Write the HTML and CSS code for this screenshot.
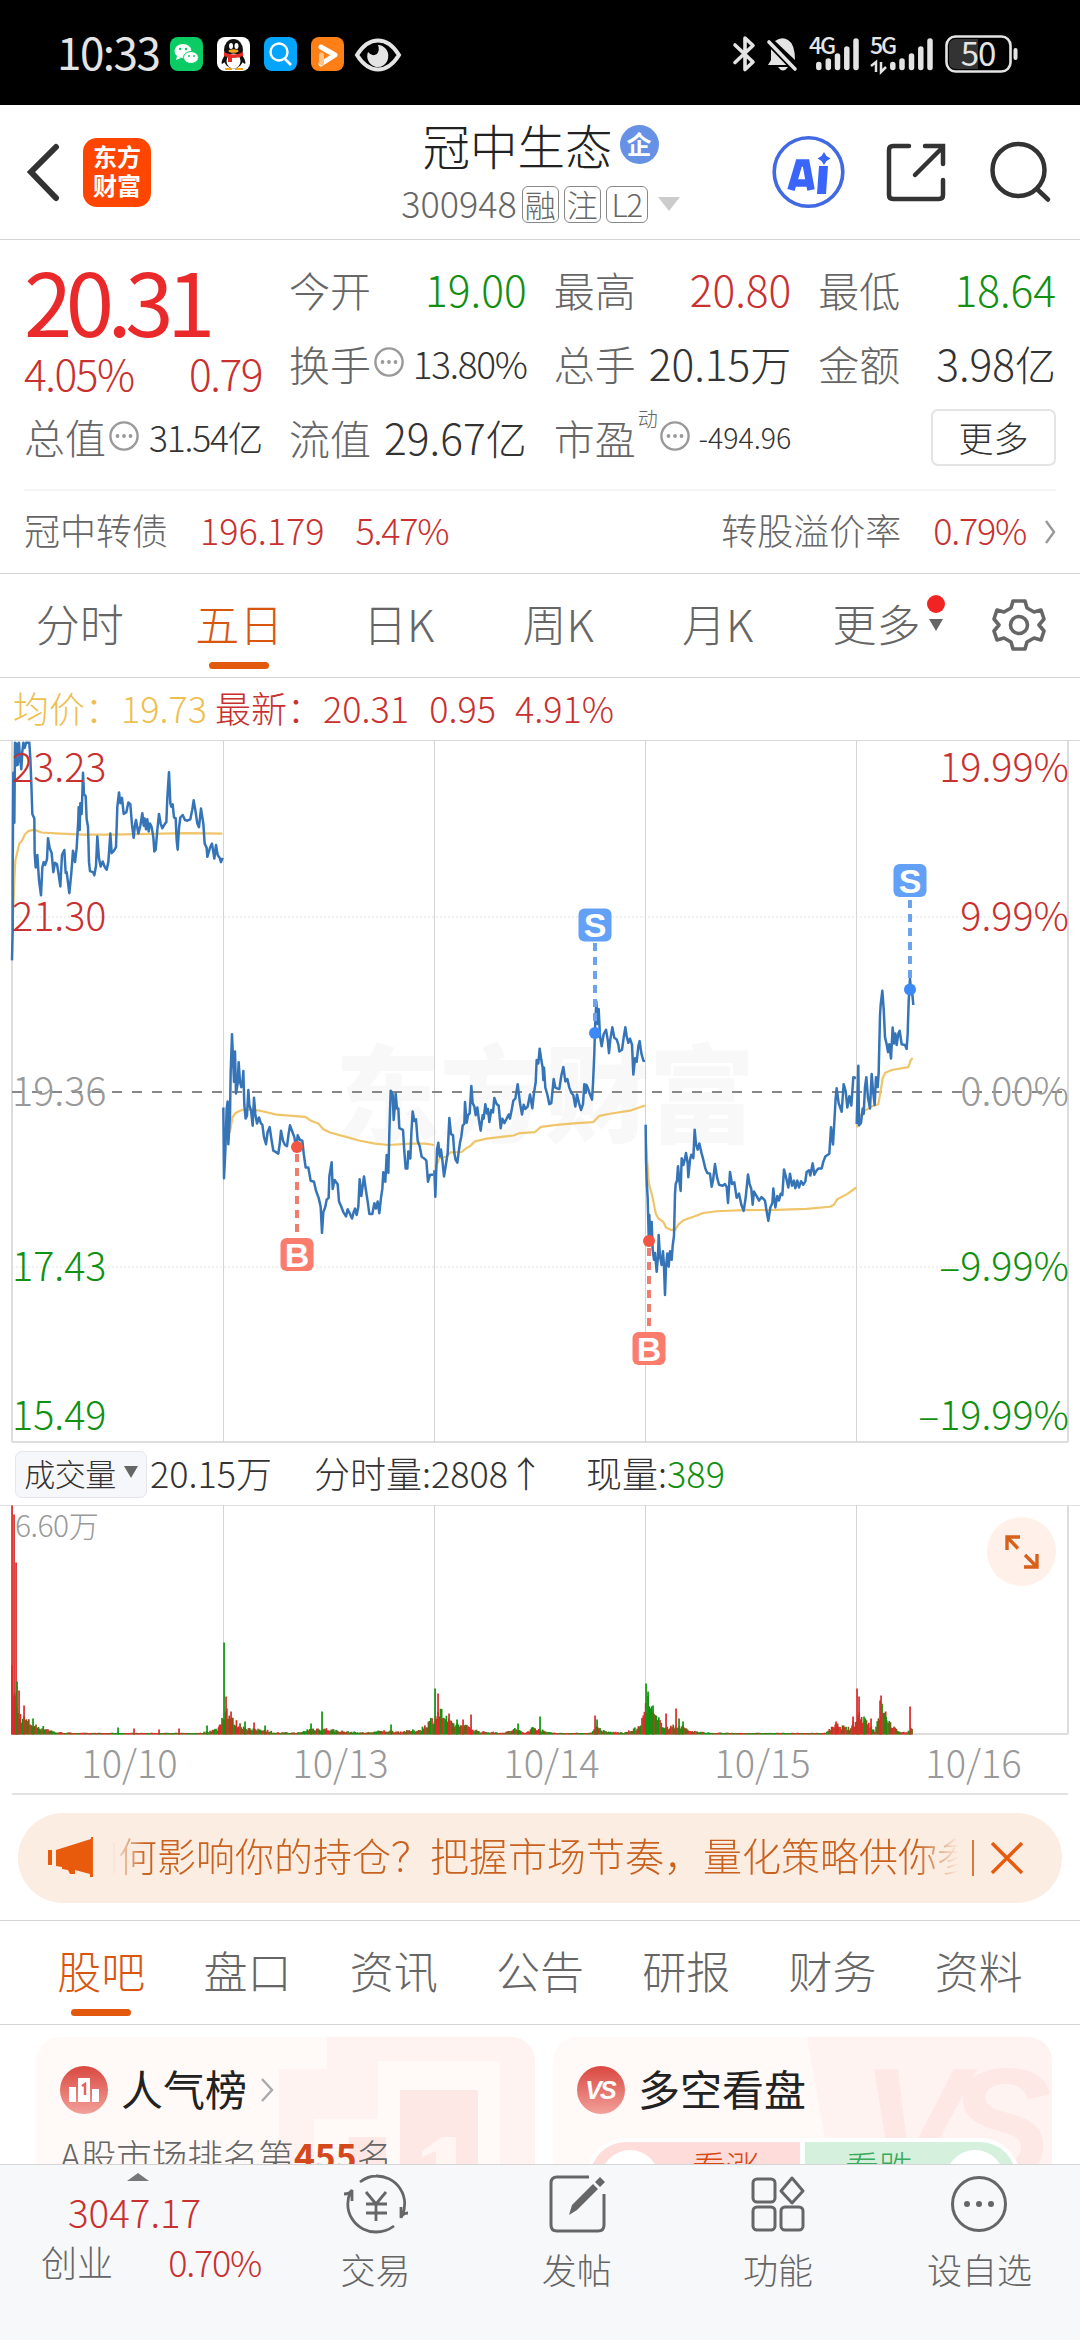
FILE: index.html
```html
<!DOCTYPE html>
<html lang="zh-CN">
<head>
    <meta charset="UTF-8">
    <meta name="viewport" content="width=device-width, initial-scale=1.0">
    <title>冠中生态 300948</title>
    <link rel="stylesheet" href="styles.css">
</head>
<body>

<div class="status-bar">
    <span class="clock">10:33</span>
    <svg class="apps" width="236" height="40" viewBox="168 34 236 40">
        <rect x="170" y="37" width="33" height="34" rx="8" fill="#0acb64"/>
        <ellipse cx="183" cy="51" rx="8.500" ry="7" fill="#fff"/>
        <path d="M177 56l-1 4 5-2z" fill="#fff"/>
        <ellipse cx="191" cy="57.500" rx="7.500" ry="6" fill="#fff" stroke="#0acb64"/>
        <g fill="#0acb64"><circle cx="180" cy="49" r="1.200"/><circle cx="186" cy="49" r="1.200"/><circle cx="189" cy="56" r="1"/><circle cx="194" cy="56" r="1"/></g>
        <rect x="217" y="37" width="33" height="34" rx="8" fill="#fff"/>
        <path d="M225 55c-3 4-4 8-3 9l3-2zM242 55c3 4 4 8 3 9l-3-2z" fill="#111"/>
        <ellipse cx="233.500" cy="50" rx="9.500" ry="11" fill="#111"/>
        <ellipse cx="233.500" cy="59" rx="9.500" ry="9.500" fill="#111"/>
        <ellipse cx="233.500" cy="61" rx="7" ry="7.500" fill="#fff"/>
        <path d="M224 52q9.500 5 19 0v4q-9.500 4-19 0z" fill="#e22b22"/><path d="M228 55h4v7h-4z" fill="#e22b22"/>
        <ellipse cx="231" cy="46" rx="2" ry="3" fill="#fff"/><ellipse cx="236.500" cy="46" rx="2" ry="3" fill="#fff"/>
        <ellipse cx="233.500" cy="51" rx="5" ry="1.800" fill="#f7a21b"/><path d="M225 68h7v2h-7zM235 68h8v2h-8z" fill="#f7a21b"/>
        <rect x="264" y="37" width="33" height="34" rx="8" fill="#06a5fd"/>
        <circle cx="279" cy="52" r="8.500" fill="none" stroke="#fff" stroke-width="2.400"/>
        <path d="M285 59l6 6" stroke="#fff" stroke-width="2.600"/>
        <rect x="311" y="37" width="33" height="34" rx="8" fill="#fd7f16"/>
        <path d="M321 47l14 8-14 9" fill="none" stroke="#fff" stroke-width="5" stroke-linejoin="round" stroke-linecap="round"/>
        <path d="M321.500 55v8" stroke="#ffc48a" stroke-width="5" stroke-linecap="round"/>
        <path d="M357 55q9-14.500 21-14.500t21 14.500q-9 14.500-21 14.500t-21-14.500z" fill="none" stroke="#e4e4e4" stroke-width="4"/>
        <path d="M378 45a10.500 11 0 1 1-10 7q4 5 9 2 3-4 1-9z" fill="#e4e4e4"/>
    </svg>
    <svg class="signals" width="290" height="46" viewBox="730 31 290 46">
        <path d="M735 45l18 17-8 7.500V38l8 7.500-18 17" fill="none" stroke="#e4e4e4" stroke-width="3.600" stroke-linejoin="round" stroke-linecap="round"/>
        <path d="M771 48v12l-3 5h22zM775 41q7-5 13-1 7 4 7 20zM778 67h10q-5 7-10 0z" fill="#e4e4e4"/>
        <path d="M769 42l27 28" stroke="#000" stroke-width="7"/>
        <path d="M769 42l26 27" stroke="#e4e4e4" stroke-width="3.600" stroke-linecap="round"/>
        <text x="809" y="54" class="net">4G</text>
        <text x="870" y="54" class="net">5G</text>
        <g stroke="#e4e4e4" stroke-width="5.500" stroke-linecap="round">
            <path d="M818.800 64.500v3M828.300 61v6.500M837.500 56v11.500M846.800 49v18.500M856 41v26.500M892.800 64.500v3M902 61v6.500M911.500 56v11.500M920.800 49v18.500M930 41v26.500"/>
        </g>
        <path d="M871 66l5-4v10M881 62v10l5-5" fill="none" stroke="#e4e4e4" stroke-width="2.500"/>
        <rect x="946.500" y="36.500" width="64" height="35" rx="9" fill="#000" stroke="#e4e4e4" stroke-width="2.600"/>
        <path d="M956 39h22v30h-22q-7 0-7-7v-16q0-7 7-7z" fill="#333"/>
        <path d="M1015.500 50v8" stroke="#e4e4e4" stroke-width="4" stroke-linecap="round"/>
        <text x="978" y="65.500" class="battery-text">50</text>
    </svg>
</div>

<header class="header">
    <svg class="back" width="34" height="60" viewBox="0 0 34 60"><path d="M30 5L5 30l25 26" fill="none" stroke="#333" stroke-width="6" stroke-linecap="round"/></svg>
    <div class="logo"><span>东方</span><span>财富</span></div>
    <div class="title">
        <div class="name">冠中生态<span class="badge">企</span></div>
        <div class="code"><span>300948</span><i>融</i><i>注</i><i class="l2">L2</i><b class="caret"></b></div>
    </div>
    <svg class="actions" width="282" height="76" viewBox="770 134 282 76">
        <circle cx="808.500" cy="172" r="34.300" fill="none" stroke="#4169e1" stroke-width="3.600"/>
        <path d="M791 190l8-27h7l5 27M795 183h13" fill="none" stroke="#3965fa" stroke-width="7.500"/>
        <path d="M819 166h9l-2 28h-9zM824 152l2.500 4 4 2.500-4 2.500-2.500 4-2.500-4-4-2.500 4-2.500z" fill="#3965fa"/>
        <g fill="none" stroke="#333" stroke-width="4.500" stroke-linecap="round">
            <path d="M909 146h-16q-4 0-4 4v45q0 4 4 4h46q4 0 4-4v-15M925 146h18v18M942 148l-27 27"/>
            <circle cx="1018.500" cy="170" r="26"/><path d="M1038 190l10 9.500"/>
        </g>
    </svg>
</header>

<section class="quote">
    <div class="price-col">
        <div class="price">20.31</div>
        <div class="cell red num"><span>4.05%</span><span>0.79</span></div>
        <div class="cell"><label>总值</label><svg class="dots" viewBox="0 0 30 30"><use href="#dots"/></svg><span class="small num">31.54<em>亿</em></span></div>
    </div>
    <div class="grid">
        <div class="cell"><label>今开</label><span class="green">19.00</span></div>
        <div class="cell"><label>最高</label><span class="red">20.80</span></div>
        <div class="cell"><label>最低</label><span class="green">18.64</span></div>
        <div class="cell"><label>换手</label><svg class="dots" viewBox="0 0 30 30"><use href="#dots"/></svg><span class="num mid">13.80%</span></div>
        <div class="cell"><label>总手</label><span>20.15<em>万</em></span></div>
        <div class="cell"><label>金额</label><span>3.98<em>亿</em></span></div>
        <div class="cell"><label>流值</label><span>29.67<em>亿</em></span></div>
        <div class="cell"><label>市盈</label><sup>动</sup><svg class="dots" viewBox="0 0 30 30"><use href="#dots"/></svg><span class="tiny">-494.96</span></div>
        <div class="cell"><button class="more">更多</button></div>
    </div>
    <div class="bond">
        <span>冠中转债</span><span class="red v1">196.179</span><span class="num red v2">5.47%</span>
        <span class="prem">转股溢价率</span><span class="num red">0.79%</span>
        <svg width="12" height="26" viewBox="0 0 12 26"><path d="M2 2l8 11-8 11" fill="none" stroke="#999" stroke-width="2.400"/></svg>
    </div>
</section>

<nav class="tabs">
    <span>分时</span><span class="on">五日</span><span>日K</span><span>周K</span><span>月K</span>
    <span class="drop">更多<b class="red-dot"></b><b class="tri"></b></span>
    <svg class="gear" width="54" height="54" viewBox="0 0 54 54" fill="none" stroke="#666" stroke-width="3.600">
        <path d="M21 3h12l2 7 7 4 7-2 3 9-5 6 5 6-3 9-7-2-7 4-2 7H21l-2-7-7-4-7 2-3-9 5-6-5-6 3-9 7 2 7-4z" stroke-linejoin="round"/><circle cx="27" cy="27" r="8.500"/>
    </svg>
</nav>

<div class="legend">
    <span class="avg">均价：</span><span class="avg">19.73</span><span class="g2">最新：</span><span>20.31</span><span class="g4">0.95</span><span class="g5">4.91%</span>
</div>

<svg class="chart" width="1080" height="703" viewBox="0 740 1080 703">
    <text x="335" y="1134" class="watermark" textLength="420">东方财富</text>
    <path d="M0 740.500h1080" stroke="#d9d9d9"/>
    <path d="M12 741v701M1068 741v701M12 1442h1056" stroke="#ddd" stroke-width="2"/>
    <path d="M223.500 741v701M434.500 741v701M645.500 741v701M856.500 741v701" stroke="#d4d4d4"/>
    <path d="M12 917h1056M12 1267h1056" stroke="#e2e2e2" stroke-dasharray="2 2"/>
    <path d="M12 1092h1056" stroke="#888" stroke-width="2" stroke-dasharray="10 10"/>
    <g class="curve">
        <g transform="translate(0 730) scale(.33333 .35714)">
            <polyline class="mean" points="37,560 40,500 43,420 46,365 50,350 58,318 66,310 75,292 85,283 97,280 108,281 125,287 180,290 250,293 340,293 450,291 560,289 667,290"/>
            <polyline class="mean" points="672,1130 680,1130 690,1125 697,1085 706,1073 720,1066 735,1062 780,1066 830,1077 915,1083 935,1095 955,1102 970,1118 990,1127 1030,1137 1080,1150 1125,1158 1165,1162 1230,1158 1275,1158 1302,1162"/>
            <polyline points="36,645 38,560 38,400 40,120 41,180 43,260 45,36 47,100 50,38 53,98 57,36 60,80 64,110 67,60 70,36 74,50 78,36 88,36 91,80 94,150 97,235 103,248 104,345 107,385 112,350 117,420 123,463 127,385 131,370 135,378 141,362 144,303 149,330 155,345 160,398 165,372 171,376 176,405 181,438 186,350 193,336 197,400 200,398 208,457 214,400 219,338 225,370 230,330 235,250 236,216 239,280 241,205 245,235 249,120 252,180 257,185 260,250 264,270 267,370 270,395 279,398 283,407 288,380 292,298 297,360 302,382 308,368 315,385 320,391 325,370 331,290 335,345 342,338 348,328 352,215 357,175 361,205 366,190 371,235 379,230 385,203 391,208 396,265 401,302 405,265 408,252 415,290 421,268 427,233 431,268 434,248 438,278 442,250 446,284 450,262 455,272 460,300 463,340 467,335 472,280 477,235 482,262 487,275 495,262 499,258 502,190 507,118 511,205 514,215 518,208 522,245 527,247 530,310 533,335 537,275 541,245 548,238 555,252 562,254 571,250 577,222 581,197 587,230 592,262 597,272 603,220 610,262 614,318 620,330 622,355 630,330 636,318 643,360 648,322 653,350 659,358 663,370 668,358"/>
            <polyline points="670,1057 672,1255 676,1180 680,1060 683,1040 685,1160 690,1080 692,960 696,852 700,940 702,985 705,900 708,1018 713,990 716,930 720,985 724,1000 728,980 730,955 733,1050 737,1088 741,1080 745,1008 748,1050 753,1065 758,1108 762,1030 766,1075 771,1102 777,1085 783,1102 787,1105 792,1140 798,1160 803,1125 809,1112 815,1150 820,1178 828,1182 835,1186 839,1160 843,1122 849,1150 855,1162 861,1165 866,1130 870,1107 877,1125 883,1140 889,1175 893,1135 900,1148 907,1150 911,1185 917,1225 925,1225 932,1262 942,1265 948,1290 956,1310 962,1335 966,1408 970,1350 976,1335 980,1315 986,1310 988,1250 995,1210 998,1285 1004,1260 1013,1272 1017,1320 1024,1335 1030,1350 1038,1362 1043,1342 1050,1355 1056,1368 1061,1350 1065,1340 1070,1358 1075,1335 1079,1258 1084,1305 1092,1250 1098,1290 1103,1320 1108,1355 1117,1355 1123,1325 1128,1340 1133,1320 1138,1353 1143,1310 1147,1285 1150,1238 1156,1265 1160,1190 1165,1240 1168,1130 1172,1010 1178,1020 1181,1092 1184,1060 1187,1018 1191,1060 1195,1060 1198,1115 1209,1120 1213,1180 1217,1228 1222,1228 1225,1180 1231,1200 1234,1130 1238,1068 1243,1095 1248,1090 1253,1150 1259,1165 1265,1195 1273,1200 1279,1205 1284,1265 1290,1245 1300,1245"/>
        </g>
        <g transform="translate(430 850) scale(.33333 .34437)">
            <polyline class="mean" points="13,920 20,915 28,895 50,890 62,878 95,877 110,865 120,860 135,846 170,838 250,829 270,822 315,819 333,804 380,798 440,793 490,790 508,772 540,766 600,757 645,742"/>
            <polyline class="mean" points="648,850 652,910 657,970 668,1010 677,1055 685,1070 700,1080 708,1096 722,1103 735,1103 745,1088 760,1075 790,1065 820,1054 860,1049 940,1046 1040,1045 1130,1042 1200,1036 1212,1030 1222,1014 1250,1000 1279,980"/>
            <polyline points="13,930 16,1007 18,950 21,870 25,850 29,890 33,870 37,900 42,948 48,912 53,880 58,778 63,825 69,828 73,880 77,900 82,908 87,870 90,850 94,832 98,800 103,795 105,732 110,792 114,770 119,765 124,685 128,735 133,745 137,770 142,748 147,785 152,815 158,770 161,780 166,738 171,765 174,752 178,790 184,755 189,762 193,720 200,738 206,742 212,808 217,780 223,793 230,780 236,768 240,780 246,750 250,728 256,722 263,680 270,735 276,768 281,740 286,752 293,745 300,710 307,750 312,705 317,675 320,610 325,620 329,577 334,610 338,632 340,668 342,632 346,690 352,710 358,738 364,735 371,665 376,690 383,693 388,694 394,655 400,630 406,672 412,665 418,690 424,705 430,712 436,745 441,710 447,735 453,755 459,738 463,680 467,705 469,682 473,690 480,710 486,725 489,680 493,590 495,520 499,440 503,505 506,462 510,540 515,570 521,535 528,522 533,550 537,590 541,550 547,515 553,545 560,550 565,565 568,585 576,580 581,545 586,515 590,540 595,560 600,548 606,565 610,652 615,605 620,615 625,570 629,555 634,590 640,612 645,613"/>
            <polyline points="647,798 648,900 650,960 653,1010 656,1120 658,1060 661,1130 665,1080 668,1160 672,1190 675,1170 680,1225 684,1180 686,1118 690,1180 695,1205 699,1165 702,1210 705,1292 708,1210 712,1172 716,1210 720,1165 725,1190 728,1150 732,1120 735,1000 737,970 741,960 744,918 748,960 752,990 755,895 760,915 764,900 768,880 773,910 775,950 780,900 784,885 790,895 794,812 798,855 803,870 808,852 814,878 820,900 826,925 832,938 840,940 845,978 849,960 855,912 861,950 867,972 878,975 885,970 890,978 894,1025 900,935 906,970 913,965 920,1010 927,998 934,1030 941,1048 947,1010 954,942 959,970 964,985 968,1030 972,992 980,1005 987,1018 995,1008 1005,1018 1010,1050 1015,1077 1021,1038 1027,1025 1030,983 1036,1038 1042,1005 1047,1018 1052,998 1057,1002 1062,928 1068,950 1075,980 1080,940 1086,975 1092,960 1096,982 1102,960 1107,980 1113,962 1120,972 1126,962 1130,935 1137,930 1141,945 1148,910 1153,943 1160,930 1165,925 1175,925 1180,905 1186,890 1198,882 1203,805 1209,855 1213,790 1217,720 1220,692 1226,735 1235,760 1241,680 1247,700 1252,748 1258,715 1264,742 1270,660 1278,662"/>
        </g>
        <g transform="translate(640 730) scale(.33333 .35714)">
            <polyline class="mean" points="651,1113 655,1090 665,1075 675,1066 692,1055 715,1048 722,1010 728,975 736,960 755,952 805,944 812,925 818,918"/>
            <polyline points="650,1103 655,940 657,1107 663,1100 668,1060 671,1075 675,1000 679,972 684,1030 690,1060 695,963 699,1010 704,1050 708,972 713,1000 716,960 720,800 722,770 727,730 731,780 735,860 740,880 744,902 748,880 753,920 758,833 762,878 766,850 770,882 775,850 779,842 785,880 795,882 800,893 803,850 806,760 810,697 814,740 817,740 820,770"/>
        </g>
    </g>
    <g class="axis">
        <text x="12" y="782" class="red">23.23</text><text x="12" y="931" class="red">21.30</text>
        <text x="12" y="1106" class="grey">19.36</text><text x="12" y="1281" class="green">17.43</text><text x="12" y="1430" class="green">15.49</text>
        <g text-anchor="end">
            <text x="1069" y="782" class="red">19.99%</text><text x="1069" y="931" class="red">9.99%</text>
            <text x="1069" y="1106" class="grey">0.00%</text><text x="1069" y="1281" class="green">–9.99%</text><text x="1069" y="1430" class="green">–19.99%</text>
        </g>
    </g>
    <g class="mark sell">
        <path d="M595 943v84M910 900v82"/>
        <circle cx="595" cy="1033" r="6"/><circle cx="910" cy="989.500" r="6"/>
        <rect x="578.500" y="908.500" width="33" height="33" rx="6"/><rect x="893.500" y="864" width="33" height="33" rx="6"/>
        <text x="595" y="937">S</text><text x="910" y="892.500">S</text>
    </g>
    <g class="mark buy">
        <path d="M297 1154v84M649 1248v84"/>
        <circle cx="297" cy="1147" r="6"/><circle cx="649" cy="1241" r="6"/>
        <rect x="280.500" y="1238" width="33" height="33" rx="6"/><rect x="632.500" y="1332" width="33" height="33" rx="6"/>
        <text x="297" y="1266.500">B</text><text x="649" y="1360.500">B</text>
    </g>
</svg>

<div class="vol-head">
    <span class="picker">成交量<b class="tri"></b></span>
    <span>20.15万</span><span class="m1">分时量:2808↑</span><span class="m2">现量:<span class="green">389</span></span>
</div>
<div class="volume">
    <svg width="1080" height="230" viewBox="0 1505 1080 230">
        <path d="M0 1505.500h1080" stroke="#e0e0e0"/>
        <path d="M12 1505v229M1068 1505v229M12 1734h1056" stroke="#ddd" stroke-width="2"/>
        <path d="M223.500 1505v229M434.500 1505v229M645.500 1505v229M856.500 1505v229" stroke="#d4d4d4"/>
        <text x="15" y="1537" class="max">6.60万</text>
        <g id="bars"></g>
    </svg>
    <svg class="expand" width="69" height="69" viewBox="0 0 69 69">
        <circle cx="34.500" cy="34.500" r="34.500" fill="#fff1ea"/>
        <path d="M20 33V20h13M20.500 20.500L31 31.500M50 37v13H37M49.500 49.500L38 38" fill="none" stroke="#d9601a" stroke-width="3.400"/>
    </svg>
</div>
<div class="dates"><span>10/10</span><span>10/13</span><span>10/14</span><span>10/15</span><span>10/16</span></div>

<div class="notice">
    <svg width="46" height="42" viewBox="0 0 46 42" fill="#e85a0c"><path d="M0 13h4v15H0zM8 13L43 2V0h2v40h-3v-3l-15-4v4h-5l-2-4-6-1v-2l-6-1z"/></svg>
    <div class="marquee"><span>如何影响你的持仓？把握市场节奏，量化策略供你参</span></div>
    <i></i>
    <svg width="32" height="32" viewBox="0 0 32 32"><path d="M1 1l30 30M31 1L1 31" stroke="#e85a0c" stroke-width="3.400"/></svg>
</div>

<nav class="tabs2">
    <span class="on">股吧</span><span>盘口</span><span>资讯</span><span>公告</span><span>研报</span><span>财务</span><span>资料</span>
</nav>

<div class="cards">
    <div class="card">
        <svg class="deco" width="260" height="130" viewBox="275 2037 260 130"><path d="M327 2037h208v130h-35v-106H378v58h-64v48h-35v-98h48z" fill="#fef3f1"/><path d="M400 2090h78v77h-78zM349 2137h37v30h-37z" fill="#fde8e5"/><path d="M422 2151l20-14h14v30h-20v-16l-14 6z" fill="#fff5f3"/></svg>
        <div class="card-title">
            <svg width="48" height="48" viewBox="0 0 48 48"><use href="#disc"/><path d="M9 21h7v15H9zM18 12h12v24H18zM32 23h7v13h-7z" fill="#fff"/><path d="M22 20l3-2v11" fill="none" stroke="#e2645d" stroke-width="2.500"/></svg>
            <span>人气榜</span>
            <svg class="chev" width="14" height="24" viewBox="0 0 14 24"><path d="M2 1l10 11L2 23" fill="none" stroke="#aaa" stroke-width="2.400"/></svg>
        </div>
        <div class="rank">A股市场排名第<strong>455</strong>名</div>
    </div>
    <div class="card">
        <svg class="deco" width="245" height="130" viewBox="808 2037 245 130"><path d="M808 2037h245v130h-222z" fill="#fef3f1"/><text x="862" y="2178" class="vs-shade">VS</text></svg>
        <div class="card-title">
            <svg width="48" height="48" viewBox="0 0 48 48"><use href="#disc"/><text x="23" y="33" class="vs">VS</text></svg>
            <span>多空看盘</span>
        </div>
        <div class="poll"><div class="up"><b></b>看涨</div><div class="down">看跌<b></b></div></div>
    </div>
</div>

<footer class="bottom">
    <div class="index">
        <b class="arrow"></b>
        <div class="red val">3047.17</div>
        <div class="row"><span>创业</span><span class="num red">0.70%</span></div>
    </div>
    <div class="item">
        <svg width="68" height="60" viewBox="0 0 68 60" fill="none" stroke="#666" stroke-width="2.800"><path d="M18 8q8-6 16-6a28 28 0 0 1 26 40M52 52q-8 6-18 6A28 28 0 0 1 9 17M2 20q6 0 8-4v11M66 39q-6 0-7 5V33"/><path d="M24 18l10 12 10-12M24 30h21M24 39h21M34 30v17"/></svg>
        <span>交易</span>
    </div>
    <div class="item">
        <svg width="60" height="60" viewBox="0 0 60 60" fill="none" stroke="#666" stroke-width="3"><path d="M42 3H10q-6 0-6 6v42q0 6 6 6h41q6 0 6-6V20"/><path d="M22 41l3-10L46 10l5 5-21 21zM48 8l5-5 5 5-5 5z" fill="#666" stroke="none"/></svg>
        <span>发帖</span>
    </div>
    <div class="item">
        <svg width="56" height="60" viewBox="0 0 56 60" fill="none" stroke="#666" stroke-width="3"><rect x="3" y="5" width="22" height="23" rx="4"/><rect x="3" y="33" width="22" height="23" rx="4"/><rect x="31" y="33" width="22" height="23" rx="4"/><path d="M42 4l11 13-11 12-11-12z" stroke-linejoin="round"/></svg>
        <span>功能</span>
    </div>
    <div class="item">
        <svg width="60" height="60" viewBox="0 0 60 60"><circle cx="30" cy="30" r="26.500" fill="none" stroke="#666" stroke-width="3"/><g fill="#666"><circle cx="18" cy="30" r="3"/><circle cx="30" cy="30" r="3"/><circle cx="42" cy="30" r="3"/></g></svg>
        <span>设自选</span>
    </div>
</footer>

<svg class="defs" width="0" height="0">
    <defs>
        <linearGradient id="discFill" x1="0" y1="0" x2="0" y2="1"><stop offset="0" stop-color="#d94840"/><stop offset="1" stop-color="#f2a09a"/></linearGradient>
        <g id="disc"><circle cx="24" cy="24" r="24" fill="url(#discFill)"/></g>
        <g id="dots"><circle cx="15" cy="15" r="13.600" fill="none" stroke="#999" stroke-width="2.400"/><g fill="#999"><circle cx="8.500" cy="15" r="1.900"/><circle cx="15" cy="15" r="1.900"/><circle cx="21.500" cy="15" r="1.900"/></g></g>
    </defs>
</svg>

<script src="volume.js"></script>
</body>
</html>
```
FILE: volume.js
```js
// Height of the volume along the x axis: [x, height]
const shape = [
    [12, 60], [18, 22], [25, 16], [35, 9], [45, 7], [55, 2.5], [75, 1.5], [200, 1.5], [218, 6],
    [226, 28], [232, 15], [240, 10], [252, 5], [262, 6], [275, 2], [300, 2], [310, 6], [325, 6], [345, 3],
    [365, 2], [385, 4], [400, 3], [420, 5], [430, 14], [440, 25], [450, 12], [465, 9], [480, 3], [505, 2], [515, 6],
    [525, 1.5], [534, 8], [545, 3], [560, 1.5], [590, 1.5], [597, 8], [605, 3], [625, 2], [640, 8],
    [647, 36], [655, 18], [668, 7], [680, 10], [690, 4], [705, 2], [730, 1.5], [825, 1.5], [836, 10], [850, 6],
    [860, 22], [867, 14], [875, 4], [882, 28], [890, 12], [898, 3], [908, 3], [914, 9]
];

// Single bars that stand out: [x, height, colour]
const spikes = [
    [12, 229, "r"], [14, 220, "r"], [16, 172, "r"], [17, 53, "g"], [19, 44, "r"], [24, 29, "r"], [33, 16, "g"],
    [118, 7, "g"], [134, 6, "r"], [159, 5, "r"], [179, 6, "r"], [207, 9, "g"], [219, 8, "r"],
    [224, 92, "g"], [226, 38, "r"], [231, 23, "r"], [245, 13, "g"], [254, 12, "r"], [265, 9, "g"], [311, 11, "g"], [322, 23, "g"],
    [391, 10, "g"], [435, 46, "g"], [438, 41, "r"], [449, 21, "r"], [457, 15, "g"], [463, 15, "r"], [471, 20, "r"], [518, 11, "g"],
    [540, 18, "g"], [595, 19, "r"], [597, 15, "g"], [646, 51, "g"], [648, 43, "g"], [653, 29, "g"], [666, 21, "r"], [676, 26, "r"], [679, 16, "g"], [683, 13, "g"],
    [836, 13, "r"], [853, 18, "r"], [857, 46, "r"], [859, 38, "r"], [864, 18, "g"], [871, 16, "r"], [880, 34, "r"], [881, 39, "r"], [886, 18, "g"], [910, 28, "r"]
];

const colours = { r: "#dc2a2a", g: "#109410", m: "#7a5a14" };
const bars = document.getElementById("bars");

function addBar(x, height, colour) {
    const rect = document.createElementNS("http://www.w3.org/2000/svg", "rect");
    rect.setAttribute("x", x - 0.8);
    rect.setAttribute("y", 1734.5 - height);
    rect.setAttribute("width", 1.7);
    rect.setAttribute("height", height);
    rect.setAttribute("fill", colours[colour]);
    bars.appendChild(rect);
}

function heightAt(x) {
    for (let i = 1; i < shape.length; i++) {
        if (x <= shape[i][0]) {
            const [x0, h0] = shape[i - 1];
            const [x1, h1] = shape[i];
            return h0 + (h1 - h0) * (x - x0) / (x1 - x0);
        }
    }
    return 0;
}

let seed = 7;
function rand() {
    seed = (seed * 16807) % 2147483647;
    return seed / 2147483647;
}

for (let x = 12; x <= 913; x += 1.2) {
    const mix = rand();
    addBar(x, Math.max(1.5, heightAt(x) * (0.6 + rand() * 0.6)), mix < 0.38 ? "r" : mix < 0.72 ? "g" : "m");
}
spikes.forEach(s => addBar(s[0], s[1], s[2]));
```
FILE: styles.css
```css
/* General Styles */
* {
    box-sizing: border-box;
}
body {
    margin: 0;
    width: 1080px;
    height: 2340px;
    overflow: hidden;
    background: #fff;
    color: #333;
    font-family: "Noto Sans CJK SC", sans-serif;
    font-weight: 300;
    line-height: 1;
}
i, em {
    font-style: normal;
}
.num {
    letter-spacing: -0.035em;
}
.red {
    color: #c8312f;
    fill: #c8312f;
}
.green {
    color: #119011;
    fill: #119011;
}
.grey {
    fill: #999;
}
.defs {
    position: absolute;
}

/* Status bar */
.status-bar {
    height: 105px;
    background: #000;
    color: #e4e4e4;
    display: flex;
    align-items: center;
    padding: 3px 60px 0 57px;
}
.clock {
    width: 111px;
    height: 50px;
    font-size: 44px;
    letter-spacing: -1.5px;
    font-weight: 400;
    white-space: nowrap;
}
.signals {
    margin-left: auto;
    overflow: visible;
}
.net {
    fill: #e4e4e4;
    font-size: 23px;
    font-weight: 500;
    letter-spacing: -2px;
}
.battery-text {
    fill: #e4e4e4;
    font-size: 33px;
    font-weight: 400;
    text-anchor: middle;
    letter-spacing: -1px;
}

/* Header */
.header {
    height: 135px;
    border-bottom: 1px solid #d4d4d4;
    display: flex;
    align-items: center;
    padding: 0 28px 0 26px;
}
.logo {
    width: 68px;
    height: 69px;
    margin-left: 23px;
    border-radius: 14px;
    background: #fe4600;
    color: #fff;
    font-size: 24px;
    font-weight: 700;
    display: flex;
    flex-direction: column;
    align-items: center;
    justify-content: center;
    gap: 5px;
    padding-bottom: 3px;
}
.title {
    flex: 1;
    padding-left: 160px;
}
.name {
    display: flex;
    align-items: center;
    justify-content: center;
    font-size: 47.5px;
    color: #222;
    margin-bottom: 17px;
    white-space: nowrap;
}
.badge {
    width: 39px;
    height: 39px;
    margin-left: 7px;
    border-radius: 50%;
    background: #6791e5;
    color: #fff;
    font-size: 25px;
    font-weight: 700;
    line-height: 36px;
    text-align: center;
}
.code {
    display: flex;
    align-items: center;
    justify-content: center;
    height: 38px;
    font-size: 36px;
    color: #666;
}
.code span {
    height: 40px;
}
.code i {
    width: 37px;
    height: 37px;
    margin-left: 5px;
    border: 1px solid #888;
    border-radius: 6px;
    font-size: 31px;
    line-height: 33px;
    text-align: center;
}
.code .l2 {
    width: 42px;
    letter-spacing: -1px;
}
.caret {
    margin-left: 10px;
    border: 11px solid transparent;
    border-top: 14px solid #ccc;
    border-bottom: 0;
}

/* Quote */
.quote {
    height: 334px;
    padding: 12px 24px 0 24px;
    border-bottom: 1px solid #d4d4d4;
    display: grid;
    grid-template-columns: 238px 1fr;
    grid-template-rows: 237px 84px;
    column-gap: 27px;
}
.price-col {
    padding-top: 4px;
}
.price {
    height: 86px;
    color: #ea2a2a;
    font-size: 87px;
    font-weight: 400;
    letter-spacing: -6.5px;
}
.cell {
    display: flex;
    align-items: center;
    justify-content: space-between;
    font-size: 42.5px;
    white-space: nowrap;
}
.price-col .cell {
    height: 63px;
}
.cell label {
    font-size: 41px;
    color: #666;
}
.cell em {
    font-size: 41px;
}
.cell .dots {
    width: 30px;
    height: 30px;
    margin: 0 auto 2px 3px;
}
.cell .small, .cell .small em {
    font-size: 35.5px;
}
.cell .mid {
    font-size: 37px;
}
.cell .tiny {
    font-size: 28.5px;
}
.cell sup {
    font-size: 20px;
    color: #666;
    margin: -36px 0 0 2px;
    width: 18px;
}
.cell sup + .dots {
    margin-left: 4px;
}
.grid {
    display: grid;
    grid-template-columns: repeat(3, 1fr);
    grid-template-rows: repeat(3, 74px);
    column-gap: 27px;
}
.more {
    width: 125px;
    height: 57px;
    margin-left: auto;
    padding: 0 0 7px;
    border: 2px solid #e4e4e4;
    border-radius: 7px;
    background: #fff;
    color: #333;
    font: 300 35px "Noto Sans CJK SC", sans-serif;
}
.bond {
    grid-column: 1 / 3;
    border-top: 2px solid #f4f4f4;
    display: flex;
    align-items: center;
    padding-bottom: 7px;
    font-size: 36px;
    color: #666;
}
.v1 {
    margin-left: 32px;
}
.v2 {
    margin-left: 31px;
}
.prem {
    margin: 0 32px 0 auto;
}
.bond svg {
    margin: 6px 0 0 18px;
}

/* Chart tabs */
.tabs {
    height: 104px;
    border-bottom: 1px solid #d4d4d4;
    display: flex;
    align-items: center;
    padding-right: 34px;
    color: #666;
    font-size: 44px;
}
.tabs > span {
    width: 159.500px;
    height: 103px;
    line-height: 99px;
    text-align: center;
}
.on {
    color: #d9560f;
    position: relative;
}
.on::after {
    content: "";
    position: absolute;
    left: 50%;
    bottom: 8px;
    width: 60px;
    height: 7px;
    margin-left: -30px;
    border-radius: 4px;
    background: #e2580c;
}
.tabs .drop {
    position: relative;
    width: auto;
    padding-left: 35px;
}
.red-dot {
    position: absolute;
    right: -24px;
    top: 21px;
    width: 18px;
    height: 18px;
    border-radius: 50%;
    background: #f12424;
}
.tri {
    border: 7px solid transparent;
    border-top: 12px solid #666;
    border-bottom: 0;
}
.tabs .tri {
    position: absolute;
    right: -22px;
    top: 45px;
}
.gear {
    margin: 0 0 2px auto;
}

/* Price chart */
.legend {
    height: 62px;
    display: flex;
    align-items: center;
    padding: 0 0 4px 13px;
    font-size: 36px;
    color: #c8312f;
    white-space: nowrap;
}
.avg {
    color: #edbf52;
}
.g2 { margin-left: 8px; }
.g4 { margin-left: 20px; }
.g5 { margin-left: 19px; }
.chart, .volume svg {
    display: block;
}
.watermark {
    font-size: 106px;
    font-weight: 900;
    fill: #f8f8f8;
}
.curve polyline {
    fill: none;
    stroke: #3674b8;
    stroke-width: 2.5px;
    vector-effect: non-scaling-stroke;
    stroke-linejoin: round;
}
.curve .mean {
    stroke: #f0c468;
    stroke-width: 2.2px;
}
.axis {
    font-size: 39.5px;
}
.mark path {
    stroke-width: 4px;
    stroke-dasharray: 8 6;
}
.mark text {
    fill: #fff;
    font: 700 34px "Liberation Sans", sans-serif;
    text-anchor: middle;
}
.sell {
    fill: #63a0f8;
    stroke: #6ba3ee;
    stroke-width: 0;
}
.sell circle {
    fill: #3b8af5;
}
.buy {
    fill: #fa7c6c;
    stroke: #ee7d70;
    stroke-width: 0;
}
.buy circle {
    fill: #f25643;
}

/* Volume */
.vol-head {
    height: 62px;
    display: flex;
    align-items: center;
    padding: 0 0 4px 15px;
    font-size: 36px;
    white-space: nowrap;
}
.picker {
    display: flex;
    align-items: center;
    justify-content: center;
    gap: 8px;
    width: 132px;
    height: 47px;
    margin: 4px 3px 0 0;
    padding-bottom: 4px;
    border: 1px solid #e4e6ea;
    border-radius: 7px;
    background: #f6f7fa;
    font-size: 31px;
    letter-spacing: -0.5px;
}
.m1 { margin-left: 42px; }
.m2 { margin-left: 42px; }
.volume {
    position: relative;
}
.max {
    font-size: 30px;
    fill: #999;
    letter-spacing: -0.5px;
}
.volume .expand {
    position: absolute;
    left: 987px;
    top: 12px;
}
.dates {
    height: 60px;
    margin: 0 12px;
    padding: 0 0 5px 12px;
    border-bottom: 2px solid #e2e2e2;
    display: flex;
    align-items: center;
    color: #999;
    font-size: 38px;
}
.dates span {
    flex: none;
    width: 211px;
    text-align: center;
}

/* Notice */
.notice {
    width: 1044px;
    height: 90px;
    margin: 18px 18px 17px;
    padding: 0 39px 0 30px;
    border-radius: 45px;
    background: #fcede3;
    display: flex;
    align-items: center;
}
.marquee {
    width: 848px;
    height: 56px;
    margin-left: 18px;
    overflow: hidden;
    color: #c9621f;
    font-size: 39px;
    white-space: nowrap;
    display: flex;
    line-height: 49px;
    -webkit-mask-image: linear-gradient(90deg, transparent, #000 4%, #000 95%, transparent);
    mask-image: linear-gradient(90deg, transparent, #000 4%, #000 95%, transparent);
}
.marquee span {
    margin-left: -33px;
}
.notice i {
    width: 2px;
    height: 36px;
    margin: 0 17px 0 13px;
    background: #d9783f;
}

/* Content tabs */
.tabs2 {
    height: 105px;
    padding: 0 28px;
    border-top: 1px solid #d4d4d4;
    border-bottom: 1px solid #d4d4d4;
    display: flex;
    color: #666;
    font-size: 44px;
}
.tabs2 span {
    flex: 1;
    line-height: 99px;
    text-align: center;
}

/* Cards */
.cards {
    height: 139px;
    padding: 12px 28px 0 36px;
    overflow: hidden;
    display: flex;
    gap: 18px;
}
.card {
    position: relative;
    width: 499px;
    height: 200px;
    padding: 27px 24px 0;
    border-radius: 24px;
    background: #fff9f7;
    overflow: hidden;
}
.deco {
    position: absolute;
    right: 0;
    top: 0;
}
.vs-shade {
    font: italic 700 158px "Liberation Sans", sans-serif;
    fill: #fde8e5;
    letter-spacing: -20px;
}
.vs {
    font: italic 700 25px "Liberation Sans", sans-serif;
    fill: #fff;
    text-anchor: middle;
    letter-spacing: -2px;
}
.card-title {
    position: relative;
    display: flex;
    align-items: center;
    gap: 13px;
    height: 52px;
    font-size: 42px;
    font-weight: 400;
    color: #222;
}
.card-title span {
    height: 46px;
}
.rank {
    position: relative;
    margin-top: 21px;
    font-size: 35.5px;
    color: #666;
    white-space: nowrap;
}
.rank strong {
    color: #d4491c;
    font-weight: 700;
}
.poll {
    position: relative;
    display: flex;
    gap: 5px;
    margin: 22px 8px 0 9px;
    border: 4px solid #fff;
    border-radius: 44px;
    background: #fff;
    height: 80px;
    overflow: hidden;
    font-size: 34px;
}
.up, .down {
    flex: 0 0 210px;
    position: relative;
    padding-top: 8px;
}
.up {
    padding-left: 102px;
    background: #fddcda;
    color: #d9480f;
}
.down {
    padding-left: 40px;
    background: #d6f0de;
    color: #3aaa5c;
}
.poll b {
    position: absolute;
    top: 8px;
    left: 11px;
    width: 58px;
    height: 58px;
    border-radius: 50%;
    background: #fff;
}
.down b {
    left: auto;
    right: 11px;
}

/* Bottom bar */
.bottom {
    height: 176px;
    border-top: 1px solid #d4d4d4;
    background: #f7f8fa;
    display: flex;
    position: relative;
    color: #666;
    font-size: 35px;
}
.index {
    width: 275px;
    padding: 8px 14px 0 41px;
}
.arrow {
    display: block;
    width: 0;
    margin: 0 0 11px 86px;
    border: 11px solid transparent;
    border-bottom: 8px solid #777;
    border-top: 0;
}
.index .val {
    font-size: 38.5px;
    margin-left: 27px;
}
.index .row {
    display: flex;
    justify-content: space-between;
    align-items: center;
    margin-top: 12px;
    font-size: 36px;
}
.item {
    width: 201.3px;
    display: flex;
    flex-direction: column;
    align-items: center;
    padding-top: 9px;
    gap: 17px;
}
```
